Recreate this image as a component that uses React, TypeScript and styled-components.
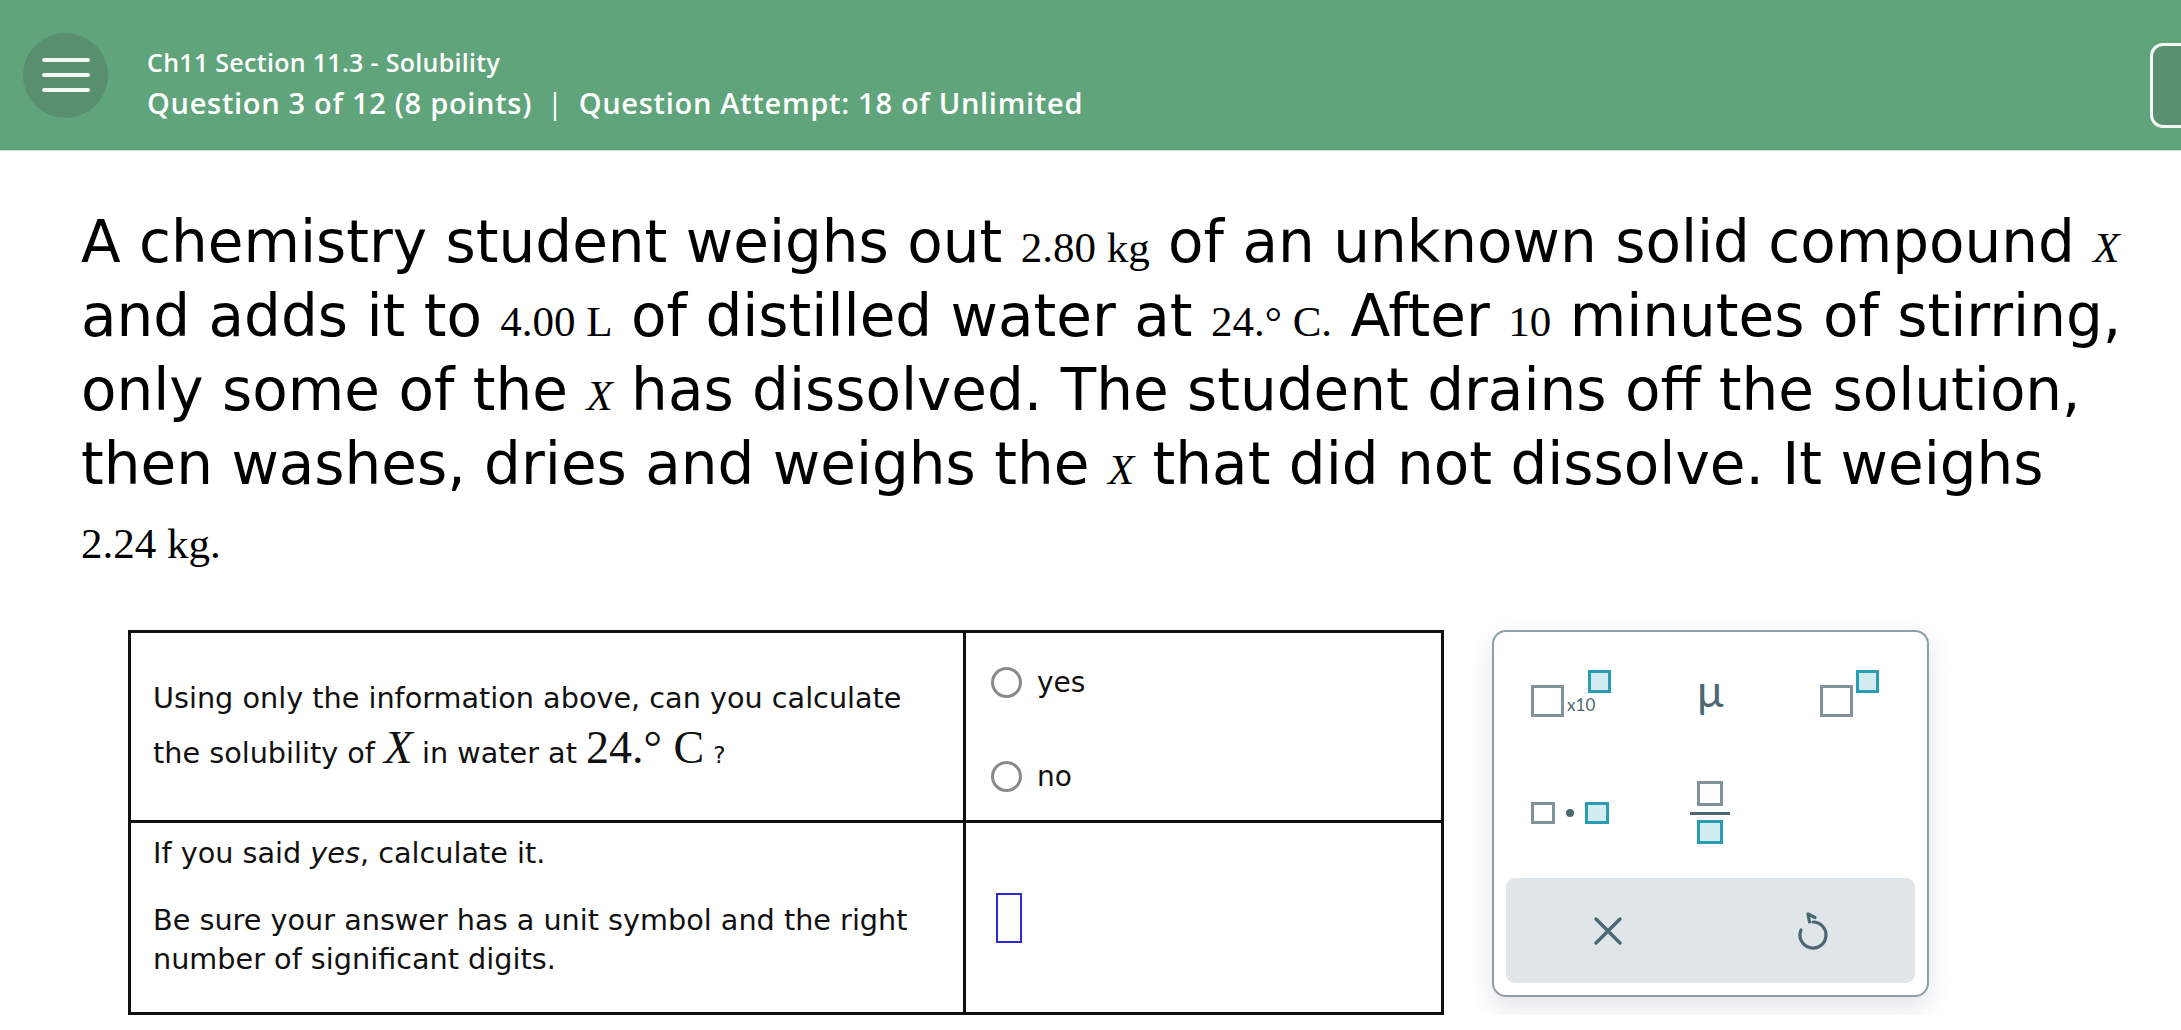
import React from 'react';
import styled, { createGlobalStyle } from 'styled-components';

const GlobalStyle = createGlobalStyle`
  html, body {
    margin: 0;
    padding: 0;
    background: #ffffff;
  }
  body {
    font-family: "DejaVu Sans", Verdana, sans-serif;
    color: #000;
  }
`;

const Header = styled.header`
  height: 151px;
  box-sizing: border-box;
  background: #5fa47b;
  border-bottom: 1px solid #cdd8d1;
  display: flex;
  align-items: center;
  padding-left: 23px;
  overflow: hidden;
`;

const MenuButton = styled.button`
  width: 85px;
  height: 85px;
  border-radius: 50%;
  border: none;
  background: #598e6f;
  display: flex;
  flex-direction: column;
  align-items: center;
  justify-content: center;
  gap: 10.5px;
  padding: 0;
  flex-shrink: 0;
`;

const MenuBar = styled.span`
  display: block;
  width: 48px;
  height: 4.5px;
  border-radius: 3px;
  background: #f3f7f4;
`;

const Titles = styled.div`
  margin-left: 39px;
  padding-top: 16px;
  color: #ffffff;
  font-family: "Open Sans", "Lato", sans-serif;
  font-weight: 600;
`;

const Section = styled.div`
  font-size: 25px;
  line-height: 32px;
  letter-spacing: 0.3px;
`;

const QuestionLine = styled.div`
  margin-top: 6px;
  font-size: 29px;
  line-height: 37px;
  letter-spacing: 0.7px;
`;

const Divider = styled.span`
  margin: 0 15px;
  font-weight: 400;
`;

const CornerButton = styled.div`
  margin-left: auto;
  margin-right: -40px;
  align-self: flex-end;
  margin-bottom: 22px;
  width: 71px;
  height: 85px;
  flex-shrink: 0;
  box-sizing: border-box;
  border: 3px solid #f4f8f5;
  border-radius: 13px;
  background: #5a8f70;
`;

const Prompt = styled.p`
  margin: 54px 0 0 81px;
  font-size: 58px;
  line-height: 74px;
  white-space: nowrap;
  color: #000;
`;

const Math = styled.span<{ $size?: number; $italic?: boolean }>`
  font-family: "Liberation Serif", "Times New Roman", serif;
  font-size: ${p => p.$size ?? 43}px;
  font-style: ${p => (p.$italic ? 'italic' : 'normal')};
  line-height: 1;
`;

const Workspace = styled.div`
  display: flex;
  align-items: flex-start;
  gap: 48px;
  margin: 55px 0 0 128px;
`;

const QuestionGrid = styled.div`
  display: grid;
  grid-template-columns: 835px 478px;
  grid-template-rows: 190px 192px;
  border-top: 3px solid #111;
  border-left: 3px solid #111;
  font-size: 28.7px;
  color: #111;
`;

const Cell = styled.div<{ $top?: number; $left: number; $center?: boolean }>`
  box-sizing: border-box;
  border-right: 3px solid #111;
  border-bottom: 3px solid #111;
  display: flex;
  flex-direction: column;
  justify-content: ${p => (p.$center ? 'center' : 'flex-start')};
  padding: ${p => p.$top ?? 0}px 16px 0 ${p => p.$left}px;
`;

const CellText = styled.p<{ $lh: number; $gap?: number }>`
  margin: 0 0 ${p => p.$gap ?? 0}px;
  line-height: ${p => p.$lh}px;
  white-space: nowrap;
`;

const Small = styled.span`
  font-size: 23px;
`;

const Choices = styled.div`
  display: flex;
  flex-direction: column;
  gap: 54px;
`;

const Choice = styled.label`
  display: flex;
  align-items: center;
  gap: 15px;
  height: 40px;
  font-size: 28px;
`;

const Radio = styled.span`
  width: 31px;
  height: 31px;
  box-sizing: border-box;
  border-radius: 50%;
  border: 3px solid #8a8a8a;
`;

const AnswerBox = styled.span`
  display: block;
  width: 26px;
  height: 50px;
  box-sizing: border-box;
  border: 2px solid #2b2bd4;
`;

const Keypad = styled.div`
  width: 437px;
  height: 367px;
  box-sizing: border-box;
  border: 2px solid #8f9fa5;
  border-radius: 14px;
  background: #fff;
  box-shadow: 0 10px 24px rgba(70, 90, 100, 0.16);
  padding: 2px 12px 12px;
  display: flex;
  flex-direction: column;
`;

const KeyGrid = styled.div`
  display: grid;
  grid-template-columns: repeat(3, 1fr);
  grid-auto-rows: 119px;
`;

const Key = styled.button`
  border: none;
  background: none;
  padding: 0;
  display: flex;
  align-items: center;
  justify-content: center;
  color: #4d6871;
`;

const Footer = styled.div`
  margin-top: 6px;
  height: 105px;
  border-radius: 9px;
  background: #dfe5e8;
  display: grid;
  grid-template-columns: 1fr 1fr;
`;

const Square = styled.span<{ $teal?: boolean; $w: number; $h: number }>`
  display: block;
  flex-shrink: 0;
  box-sizing: border-box;
  width: ${p => p.$w}px;
  height: ${p => p.$h}px;
  border: 3.5px solid ${p => (p.$teal ? '#2a9cb4' : '#80939a')};
  background: ${p => (p.$teal ? '#d3ecf2' : 'transparent')};
`;

const Glyph = styled.span<{ $ml?: number }>`
  display: flex;
  align-items: flex-start;
  height: 47px;
  margin-left: ${p => p.$ml ?? 0}px;
`;

const Lift = styled.span<{ $mt: number; $ml?: number }>`
  margin-top: ${p => p.$mt}px;
  margin-left: ${p => p.$ml ?? 0}px;
`;

const TenLabel = styled.span`
  margin: 26px 0 0 3px;
  font-family: "Lato", "Open Sans", sans-serif;
  font-size: 17px;
  line-height: 17px;
  color: #4d6871;
`;

const Micro = styled.span`
  font-family: "Lato", "Open Sans", sans-serif;
  font-size: 44px;
  line-height: 1;
  margin-top: -8px;
  color: #4d6871;
`;

const InlineRow = styled.span<{ $ml?: number }>`
  display: flex;
  align-items: center;
  margin-left: ${p => p.$ml ?? 0}px;
`;

const Dot = styled.span`
  width: 8px;
  height: 8px;
  border-radius: 50%;
  background: #4d6871;
  margin: 0 11px;
`;

const Fraction = styled.span`
  display: flex;
  flex-direction: column;
  align-items: center;
`;

const FractionBar = styled.span`
  width: 40px;
  height: 3px;
  background: #4d6871;
  margin: 6px 0 5px;
`;

const ClearIcon = () => (
  <svg width="30" height="30" viewBox="0 0 30 30" fill="none">
    <path d="M3 3 L27 27 M27 3 L3 27" stroke="#4a6873" strokeWidth="3.4" strokeLinecap="round" />
  </svg>
);

const UndoIcon = () => (
  <svg width="34" height="40" viewBox="0 0 34 40" fill="none">
    <path
      d="M5 19 A13 13 0 1 0 17 11"
      stroke="#4a6873"
      strokeWidth="3.2"
      strokeLinecap="round"
    />
    <path
      d="M19 6.5 L12 3 L13.5 11"
      stroke="#4a6873"
      strokeWidth="3.2"
      strokeLinecap="round"
      strokeLinejoin="round"
    />
  </svg>
);

export default function App() {
  return (
    <>
      <GlobalStyle />
      <Header>
        <MenuButton aria-label="menu">
          <MenuBar />
          <MenuBar />
          <MenuBar />
        </MenuButton>
        <Titles>
          <Section>Ch11 Section 11.3 - Solubility</Section>
          <QuestionLine>
            Question 3 of 12 (8 points)
            <Divider>|</Divider>
            Question Attempt: 18 of Unlimited
          </QuestionLine>
        </Titles>
        <CornerButton />
      </Header>

      <Prompt>
        A chemistry student weighs out <Math>2.80 kg</Math> of an unknown solid compound <Math $italic>X</Math>
        <br />
        and adds it to <Math>4.00 L</Math> of distilled water at <Math>24.° C.</Math> After <Math>10</Math> minutes of stirring,
        <br />
        only some of the <Math $italic>X</Math> has dissolved. The student drains off the solution,
        <br />
        then washes, dries and weighs the <Math $italic>X</Math> that did not dissolve. It weighs
        <br />
        <Math>2.24 kg.</Math>
      </Prompt>

      <Workspace>
        <QuestionGrid>
          <Cell $center $left={22}>
            <CellText $lh={52}>
              Using only the information above, can you calculate
              <br />
              the solubility of <Math $size={47} $italic>X</Math> in water at <Math $size={46}>24.° C</Math> <Small>?</Small>
            </CellText>
          </Cell>
          <Cell $top={29} $left={25}>
            <Choices>
              <Choice>
                <Radio />
                yes
              </Choice>
              <Choice>
                <Radio />
                no
              </Choice>
            </Choices>
          </Cell>
          <Cell $top={11} $left={22}>
            <CellText $lh={39} $gap={28}>
              If you said <i>yes</i>, calculate it.
            </CellText>
            <CellText $lh={39}>
              Be sure your answer has a unit symbol and the right
              <br />
              number of significant digits.
            </CellText>
          </Cell>
          <Cell $center $left={30}>
            <AnswerBox />
          </Cell>
        </QuestionGrid>

        <Keypad>
          <KeyGrid>
            <Key aria-label="scientific notation">
              <Glyph $ml={-6}>
                <Lift $mt={15}>
                  <Square $w={33} $h={32} />
                </Lift>
                <TenLabel>x10</TenLabel>
                <Lift $mt={0} $ml={-7}>
                  <Square $teal $w={23} $h={23} />
                </Lift>
              </Glyph>
            </Key>
            <Key aria-label="micro">
              <Micro>µ</Micro>
            </Key>
            <Key aria-label="superscript">
              <Glyph $ml={6}>
                <Lift $mt={15}>
                  <Square $w={33} $h={32} />
                </Lift>
                <Lift $mt={0} $ml={3}>
                  <Square $teal $w={23} $h={23} />
                </Lift>
              </Glyph>
            </Key>
            <Key aria-label="multiply">
              <InlineRow $ml={-8}>
                <Square $w={24} $h={22} />
                <Dot />
                <Square $teal $w={24} $h={22} />
              </InlineRow>
            </Key>
            <Key aria-label="fraction">
              <Fraction>
                <Square $w={26} $h={25} />
                <FractionBar />
                <Square $teal $w={26} $h={24} />
              </Fraction>
            </Key>
            <Key aria-label="empty" />
          </KeyGrid>
          <Footer>
            <Key aria-label="clear">
              <ClearIcon />
            </Key>
            <Key aria-label="undo">
              <UndoIcon />
            </Key>
          </Footer>
        </Keypad>
      </Workspace>
    </>
  );
}
